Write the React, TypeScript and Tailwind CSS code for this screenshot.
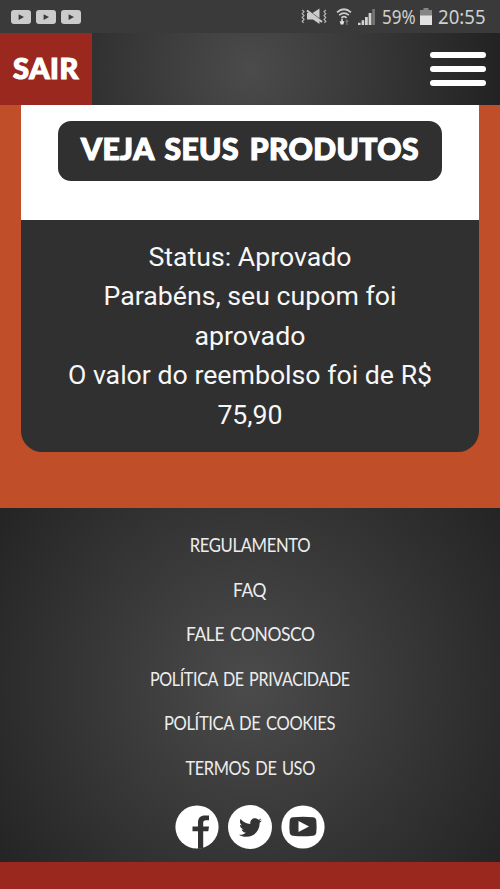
import React from "react";
import { FaTwitter } from "react-icons/fa";

const LINKS = [
  { label: "REGULAMENTO", fit: "scale-x-[0.9]" },
  { label: "FAQ", fit: "scale-x-[0.94]" },
  { label: "FALE CONOSCO", fit: "scale-x-[0.942]" },
  { label: "POLÍTICA DE PRIVACIDADE", fit: "scale-x-[0.870]" },
  { label: "POLÍTICA DE COOKIES", fit: "scale-x-[0.896]" },
  { label: "TERMOS DE USO", fit: "scale-x-[0.885]" },
];

function PlayBadge() {
  return (
    <svg width="20" height="14" viewBox="0 0 20 14">
      <rect width="20" height="14" rx="3" fill="#cbcbcb" />
      <path d="M7.6 4.2v5.800l5.400-2.900z" fill="#3a3a3a" />
    </svg>
  );
}

function MutedIcon() {
  return (
    <svg width="26" height="17" viewBox="0 0 26 17" fill="none">
      <path d="M1.2 2l1.800 1.800-1.800 1.900L3 7.600l-1.800 1.900L3 11.400l-1.800 1.900 1.400 1.500" stroke="#b5b5b5" strokeWidth="1.200" />
      <path d="M24.800 2L23 3.800l1.800 1.900L23 7.600l1.800 1.900-1.800 1.900 1.800 1.900-1.400 1.500" stroke="#b5b5b5" strokeWidth="1.200" />
      <path d="M11.500 5L18.500.5v9.700z" fill="#cbcbcb" />
      <path d="M6 5h3l9.500 7v4L12 11.500H6z" fill="#cbcbcb" />
      <path d="M6 2.500l15 11.500" stroke="#cbcbcb" strokeWidth="2" />
    </svg>
  );
}

function WifiIcon() {
  return (
    <svg width="16" height="18" viewBox="0 0 16 18" fill="none">
      <path d="M1 4.300Q8-1.800 15 4.300M3.200 7.200Q8 3 12.800 7.200M5.400 9.800Q8 7.600 10.600 9.800" stroke="#cdcdcd" strokeWidth="1.700" />
      <path d="M5.300 10.800v2.500H3.700l1 3.200h2.600l1-3.200H6.800v-2.500z" fill="#e2e2e2" />
      <path d="M10.300 17v-3H9l1.900-3 1.900 3h-1.300v3z" fill="#777" />
    </svg>
  );
}

function SignalIcon() {
  return (
    <svg width="18" height="17" viewBox="0 0 18 17">
      <path d="M0 17v-2.300h2.600V17zM3.600 17v-4.700h2.600V17zM7 17V9h2.800v8zM10.600 17V5h2.800v12z" fill="#d3d3d3" />
      <path d="M14.200 17V1h2.700v16z" fill="#767676" />
    </svg>
  );
}

function StatusBar() {
  return (
    <div className="flex h-[33px] shrink-0 items-center bg-[#3a3a3a] pl-[11px] font-['Noto_Sans',sans-serif] text-[#d0d0d0]">
      <div className="flex gap-[5px]">
        <PlayBadge />
        <PlayBadge />
        <PlayBadge />
      </div>
      <div className="ml-[220px] flex items-center">
        <MutedIcon />
        <div className="ml-[9px]"><WifiIcon /></div>
        <div className="ml-[6px]"><SignalIcon /></div>
        <div className="ml-[6px] w-[38px]">
          <span className="inline-block origin-left scale-x-[0.85] text-[20px] leading-[33px]">59%</span>
        </div>
        <svg width="12" height="17" viewBox="0 0 12 17">
          <path d="M3.500 0h5v2H12v6H0V2h3.500z" fill="#858585" />
          <path d="M0 7.500h12V17H0z" fill="#e2e2e2" />
        </svg>
        <div className="ml-[6px] w-[50px]">
          <span className="inline-block origin-left scale-x-[0.93] text-[20px] leading-[33px]">20:55</span>
        </div>
      </div>
    </div>
  );
}

function Header() {
  return (
    <header className="flex h-[72px] shrink-0 items-center justify-between bg-[radial-gradient(circle,#4b4b4b,#222222)] pr-[14px]">
      <button className="flex h-full w-[92px] items-center justify-center bg-[#9b281e] pb-[3px] text-[29px] leading-none font-black text-white">
        <span className="tracking-[0.6px] [-webkit-text-stroke:1.2px_white]">SAIR</span>
      </button>
      <button className="flex w-[56px] flex-col gap-[8px]" aria-label="Menu">
        <span className="h-[6px] w-full rounded-full bg-white" />
        <span className="h-[6px] w-full rounded-full bg-white" />
        <span className="h-[6px] w-full rounded-full bg-white" />
      </button>
    </header>
  );
}

function Socials() {
  return (
    <div className="flex justify-center gap-[9px]">
      <svg width="44" height="44" viewBox="0 0 44 44">
        <circle cx="22" cy="22" r="21.600" fill="#fff" />
        <path d="M23 44V26.200h-5.500v-4.800H23v-3.700c0-4.900 2.500-7.200 7-7.200h4v4.700h-3c-2 0-2.800.8-2.800 2.600v3.600H34l-.7 4.800h-5.100V43z" fill="#333" />
      </svg>
      <div className="flex size-[44px] items-center justify-center rounded-full bg-white">
        <FaTwitter className="size-[23px] text-[#333]" />
      </div>
      <svg width="44" height="44" viewBox="0 0 44 44">
        <circle cx="22" cy="22" r="21.600" fill="#fff" />
        <path d="M12 12.200q10-1 20 0 3 .3 3.300 3.300.6 6 0 12-.3 3-3.300 3.300-10 1-20 0-3-.3-3.300-3.300-.6-6 0-12 .3-3 3.300-3.300z" fill="#333" />
        <path d="M17.500 16v11l10.500-5.500z" fill="#fff" />
      </svg>
    </div>
  );
}

export default function App() {
  return (
    <div className="flex h-[889px] w-[500px] flex-col overflow-hidden bg-[#c04e29] font-['Lato',sans-serif]">
      <StatusBar />
      <Header />
      <main className="h-[403px] shrink-0 px-[21px]">
        <section className="flex h-[115px] justify-center bg-white pt-[16px]">
          <button className="flex h-[60px] w-[384px] items-center justify-center rounded-[13px] bg-[#303030] pb-[6px] text-[30px] leading-none font-black whitespace-nowrap text-white">
            <span className="tracking-[0.45px] [word-spacing:3.2px] [-webkit-text-stroke:1.2px_white]">VEJA SEUS PRODUTOS</span>
          </button>
        </section>
        <section className="h-[232px] rounded-b-[21px] bg-[#303030] pt-[17.600px] text-center font-['Roboto',sans-serif] text-[26.7px] leading-[39.6px] text-[#f7f7f7]">
          <p>Status: Aprovado</p>
          <p>Parabéns, seu cupom foi<br />aprovado</p>
          <p>O valor do reembolso foi de R$<br />75,90</p>
        </section>
      </main>
      <footer className="h-[354px] shrink-0 bg-[radial-gradient(circle,#4b4b4b,#242424)] pt-[15px]">
        <nav className="flex flex-col items-center text-[18.5px] leading-[44.5px] tracking-[-0.4px] text-[#ededed] [word-spacing:1.8px]">
          {LINKS.map((l) => (
            <a key={l.label} className={l.fit}>{l.label}</a>
          ))}
        </nav>
        <div className="pt-[15px]"><Socials /></div>
      </footer>
      <div className="h-[27px] shrink-0 bg-[#9b281e]" />
    </div>
  );
}
